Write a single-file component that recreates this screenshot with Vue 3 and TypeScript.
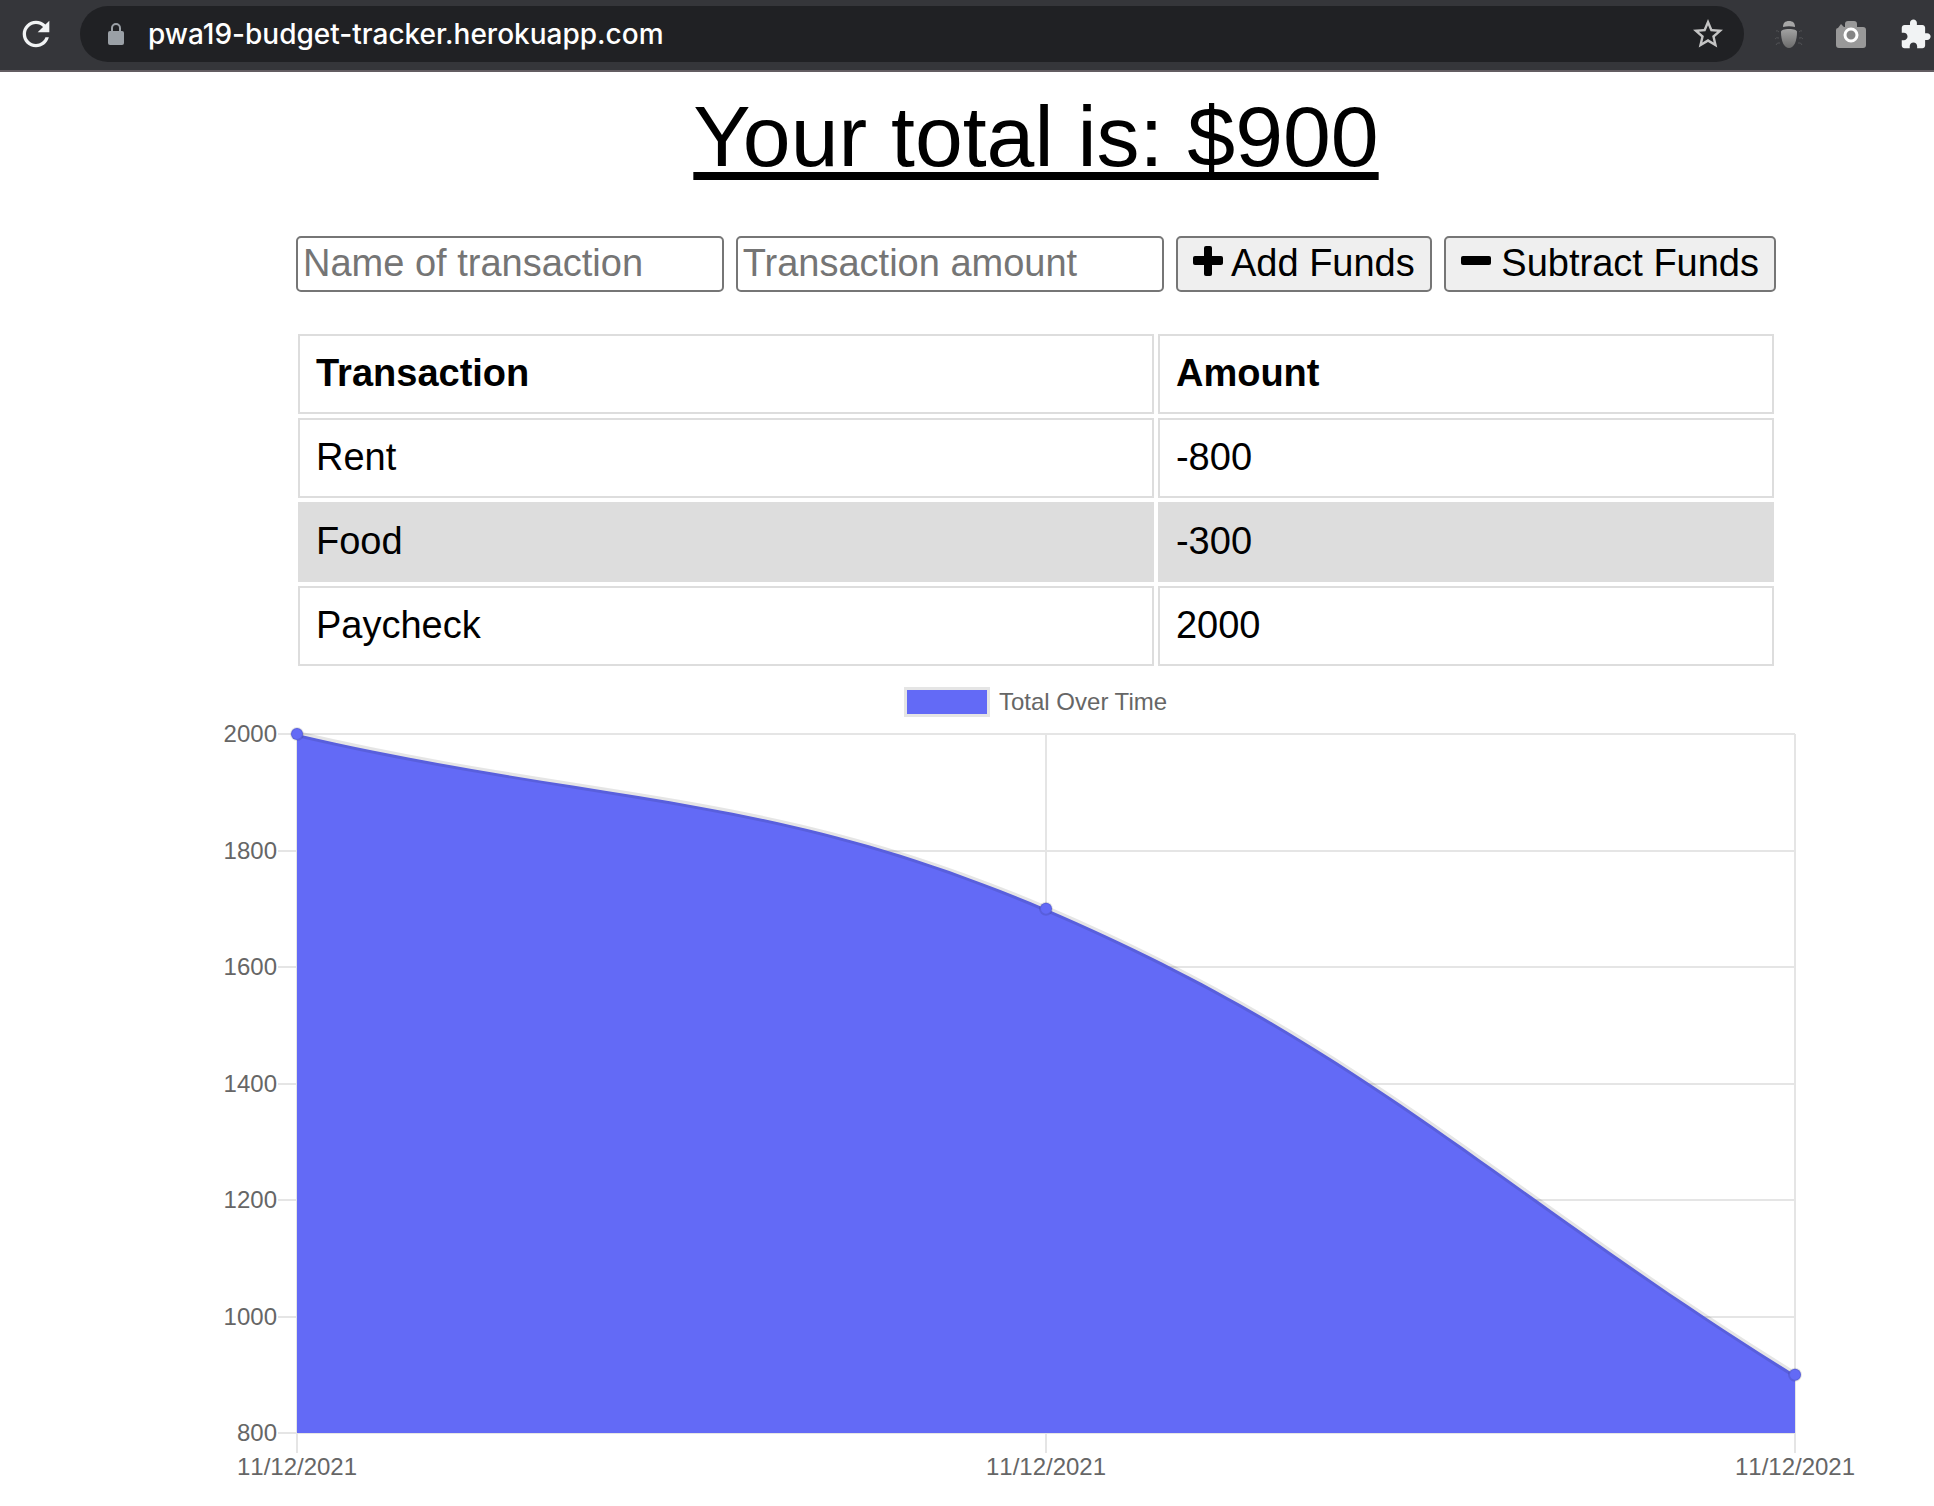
<script setup lang="ts">
import { computed, ref } from 'vue'

interface Transaction {
  name: string
  value: number
  date: string
}

interface Point {
  x: number
  y: number
}

const transactions = ref<Transaction[]>([
  { name: 'Rent', value: -800, date: '11/12/2021' },
  { name: 'Food', value: -300, date: '11/12/2021' },
  { name: 'Paycheck', value: 2000, date: '11/12/2021' },
])

const address = ref('pwa19-budget-tracker.herokuapp.com')
const name = ref('')
const amount = ref('')

const total = computed(() => transactions.value.reduce((sum, t) => sum + t.value, 0))

function addTransaction(sign: 1 | -1) {
  const value = Number(amount.value)
  if (!name.value || !value) return
  transactions.value.unshift({
    name: name.value,
    value: sign * value,
    date: new Date().toLocaleDateString('en-US'),
  })
  name.value = ''
  amount.value = ''
}

// Chart geometry, in viewBox units
const area = { left: 81, right: 1579, top: 64, bottom: 763 }
const tension = 0.4

const history = computed(() => {
  let sum = 0
  return [...transactions.value].reverse().map((t) => {
    sum += t.value
    return { date: t.date, total: sum }
  })
})

const scale = computed(() => {
  const totals = history.value.map((h) => h.total)
  const step = 200
  const max = Math.ceil(Math.max(...totals) / step) * step
  const min = Math.floor((Math.min(...totals) - 1) / step) * step
  return { min, max, step }
})

function toY(value: number): number {
  const { min, max } = scale.value
  return area.top + ((max - value) / (max - min)) * (area.bottom - area.top)
}

const ticks = computed(() => {
  const { min, max, step } = scale.value
  const list: { value: number; y: number }[] = []
  for (let v = max; v >= min; v -= step) list.push({ value: v, y: Math.round(toY(v)) })
  return list
})

const points = computed(() =>
  history.value.map((h, i, all) => ({
    x: area.left + (i / Math.max(all.length - 1, 1)) * (area.right - area.left),
    y: toY(h.total),
    date: h.date,
  })),
)

function handles(prev: Point, p: Point, next: Point): [Point, Point] {
  const before = Math.hypot(p.x - prev.x, p.y - prev.y)
  const after = Math.hypot(next.x - p.x, next.y - p.y)
  const a = (tension * before) / (before + after || 1)
  const b = (tension * after) / (before + after || 1)
  const dx = next.x - prev.x
  const dy = next.y - prev.y
  return [
    { x: p.x - a * dx, y: p.y - a * dy },
    { x: p.x + b * dx, y: p.y + b * dy },
  ]
}

const curve = computed(() => {
  const pts = points.value
  const h = pts.map((p, i) => handles(pts[i - 1] ?? p, p, pts[i + 1] ?? p))
  return pts
    .map((p, i) => {
      if (i === 0) return `M${p.x} ${p.y}`
      const out = h[i - 1][1]
      const into = h[i][0]
      return `C${out.x} ${out.y} ${into.x} ${into.y} ${p.x} ${p.y}`
    })
    .join('')
})

const fill = computed(() => `${curve.value}V${area.bottom}H${area.left}Z`)
</script>

<template>
  <header class="toolbar">
    <button class="tool reload" type="button" aria-label="Reload">
      <svg width="40" height="40" viewBox="0 0 24 24" fill="#f1f3f4">
        <path d="M17.65 6.35C16.2 4.9 14.21 4 12 4c-4.42 0-7.99 3.58-7.99 8s3.57 8 7.99 8c3.73 0 6.84-2.55 7.73-6h-2.08c-.82 2.33-3.04 4-5.65 4-3.31 0-6-2.69-6-6s2.69-6 6-6c1.66 0 3.14.69 4.22 1.78L13 11h7V4l-2.35 2.35z" />
      </svg>
    </button>
    <div class="omnibox">
      <svg class="lock" width="16" height="22" viewBox="0 0 16 22">
        <path d="M4 9V5a4 4 0 0 1 8 0v4" fill="none" stroke="#9aa0a6" stroke-width="2" />
        <rect y="8" width="16" height="14" rx="2" fill="#9aa0a6" />
      </svg>
      <input v-model="address" class="address" type="text" aria-label="Address" spellcheck="false" />
      <button class="tool" type="button" aria-label="Bookmark this page">
        <svg width="36" height="36" viewBox="0 0 24 24" fill="#c4c4c4">
          <path d="M22 9.24l-7.19-.62L12 2 9.19 8.63 2 9.24l5.46 4.73L5.82 21 12 17.27 18.18 21l-1.63-7.03L22 9.24zM12 15.4l-3.76 2.27 1-4.28-3.32-2.88 4.38-.38L12 6.1l1.71 4.04 4.38.38-3.32 2.88 1 4.28L12 15.4z" />
        </svg>
      </button>
    </div>
    <div class="extensions">
      <button class="tool" type="button" aria-label="Bug extension">
        <svg width="28" height="28" viewBox="0 0 28 28">
          <defs>
            <linearGradient id="bug" x1="0" y1="0" x2="0" y2="1">
              <stop offset="0" stop-color="#a2a2a2" />
              <stop offset="1" stop-color="#6c6c6c" />
            </linearGradient>
          </defs>
          <path d="M8 7c0-4 2-6 6-6s6 2 6 6c-4-1-8-1-12 0z" fill="#a6a6a6" />
          <path d="M6 12c0-2 3-3 8-3s8 1 8 3c0 9-3 16-8 16S6 21 6 12z" fill="url(#bug)" />
          <path d="M4 12q-2-2-3-1M4 18q-3-1-4 1M5 23q-3-1-4 2M24 12q2-2 3-1M24 18q3-1 4 1M23 23q3-1 4 2" fill="none" stroke="#525356" />
        </svg>
      </button>
      <button class="tool" type="button" aria-label="Screenshot extension">
        <svg width="30" height="28" viewBox="0 0 30 28">
          <path d="M2 8l3-4 3 3h1V4q0-3 3-3h6q3 0 3 3v3h6q3 0 3 3v15q0 3-3 3H3q-3 0-3-3V10q0-2 2-2z" fill="#999" />
          <circle cx="15" cy="15" r="6" fill="#858585" stroke="#fff" stroke-width="3" />
        </svg>
      </button>
      <button class="tool" type="button" aria-label="Extensions">
        <svg width="33" height="33" viewBox="0 0 24 24" fill="#f1f3f4">
          <path d="M20.5 11H19V7c0-1.1-.9-2-2-2h-4V3.5C13 2.12 11.88 1 10.5 1S8 2.12 8 3.5V5H4c-1.1 0-1.99.9-1.99 2v3.8H3.5c1.49 0 2.7 1.21 2.7 2.7s-1.21 2.7-2.7 2.7H2V20c0 1.1.9 2 2 2h3.8v-1.5c0-1.49 1.21-2.7 2.7-2.7 1.49 0 2.7 1.21 2.7 2.7V22H17c1.1 0 2-.9 2-2v-4h1.5c1.38 0 2.5-1.12 2.5-2.5S21.88 11 20.5 11z" />
        </svg>
      </button>
    </div>
  </header>

  <main class="page">
    <div class="wrapper">
      <h1 class="total">Your total is: ${{ total }}</h1>

      <form class="form" @submit.prevent>
        <input v-model="name" class="field" type="text" placeholder="Name of transaction" aria-label="Name of transaction" />
        <input v-model="amount" class="field" type="text" inputmode="numeric" placeholder="Transaction amount" aria-label="Transaction amount" />
        <button class="action" type="button" @click="addTransaction(1)">
          <svg width="30" height="30" viewBox="0 0 30 30">
            <rect y="10" width="30" height="9" rx="2" />
            <rect x="11" width="8" height="30" rx="2" />
          </svg>
          Add Funds
        </button>
        <button class="action" type="button" @click="addTransaction(-1)">
          <svg width="30" height="30" viewBox="0 0 30 30">
            <rect y="10" width="30" height="9" rx="2" />
          </svg>
          Subtract Funds
        </button>
      </form>

      <table class="transactions">
        <thead>
          <tr>
            <th class="name" scope="col">Transaction</th>
            <th scope="col">Amount</th>
          </tr>
        </thead>
        <tbody>
          <tr v-for="(t, i) in transactions" :key="i">
            <td>{{ t.name }}</td>
            <td>{{ t.value }}</td>
          </tr>
        </tbody>
      </table>
    </div>

    <svg class="chart" viewBox="0 0 1640 820" role="img" aria-label="Total Over Time">
      <rect x="688" y="17" width="86" height="30" fill="#e5e5e5" />
      <rect class="series" x="691" y="20" width="80" height="24" />
      <text x="783" y="40">Total Over Time</text>

      <g class="grid">
        <path v-for="t in ticks" :key="t.value" :d="`M62 ${t.y}H${area.right}`" />
        <path v-for="(p, i) in points" :key="i" :d="`M${p.x} ${area.top}V783`" />
      </g>
      <text v-for="t in ticks" :key="t.value" x="61" :y="t.y + 8" text-anchor="end">{{ t.value }}</text>
      <text v-for="(p, i) in points" :key="i" class="date" :x="p.x" y="805" text-anchor="middle">{{ p.date }}</text>

      <path class="series" :d="fill" />
      <path class="line" :d="curve" />
      <circle v-for="(p, i) in points" :key="i" class="point" :cx="p.x" :cy="p.y" r="6" />
    </svg>
  </main>
</template>

<style>
body {
  margin: 0;
  background: #fff;
}
</style>

<style scoped>
* {
  box-sizing: border-box;
}

svg {
  flex: none;
}

.toolbar {
  display: flex;
  align-items: center;
  height: 72px;
  padding: 0 2px 2px 16px;
  background: #35363a;
  border-bottom: 2px solid #635d62;
}

.tool {
  display: flex;
  padding: 0;
  border: 0;
  background: none;
}

.reload {
  margin-right: 24px;
}

.omnibox {
  display: flex;
  flex: 1;
  align-items: center;
  height: 56px;
  padding: 0 18px 0 28px;
  border-radius: 28px;
  background: #202124;
}

.address {
  flex: 1;
  min-width: 0;
  height: 40px;
  margin-left: 24px;
  padding: 0;
  border: 0;
  outline: 0;
  background: none;
  color: #fff;
  font: 500 28px Inter, sans-serif;
}

.extensions {
  display: flex;
  align-items: center;
  gap: 33px;
  margin-left: 31px;
}

.page {
  padding: 16px 78px 0 216px;
  color: #000;
  font-family: "Liberation Sans", Arial, sans-serif;
  font-size: 38px;
}

.wrapper {
  margin: 0 78px;
}

.total {
  margin: 0 0 52px;
  font-size: 86px;
  font-weight: 400;
  line-height: 96px;
  text-align: center;
  text-decoration: underline;
  text-decoration-thickness: 8px;
  text-underline-offset: 6px;
}

.form {
  display: flex;
  gap: 12px;
  margin: 0 2px 38px;
}

.field,
.action {
  height: 56px;
  border: 2px solid #767676;
  border-radius: 5px;
  font: inherit;
}

.field {
  flex: 1;
  min-width: 0;
  padding: 0 5px 2px;
  background: #fff;
}

.field::placeholder {
  color: #757575;
  opacity: 1;
}

.action {
  padding: 0 15px 2px;
  background: #efefef;
  color: #000;
  white-space: nowrap;
}

.transactions {
  width: 100%;
  table-layout: fixed;
  border-spacing: 4px;
  line-height: 44px;
}

.name {
  width: 58.15%;
}

.transactions th,
.transactions td {
  padding: 15px 16px 17px;
  border: 2px solid #ddd;
  text-align: left;
}

.transactions tbody tr:nth-child(even) td {
  background: #ddd;
}

.chart {
  display: block;
  width: 100%;
}

.chart text {
  fill: #666;
  font-size: 24px;
}

.chart .date {
  font-kerning: none;
}

.grid {
  stroke: #e5e5e5;
  stroke-width: 2;
}

.series {
  fill: #636af6;
}

.line {
  fill: none;
  stroke: rgb(0 0 0 / 10%);
  stroke-width: 6;
}

.point {
  fill: #636af6;
  stroke: rgb(0 0 0 / 10%);
  stroke-width: 2;
}
</style>
